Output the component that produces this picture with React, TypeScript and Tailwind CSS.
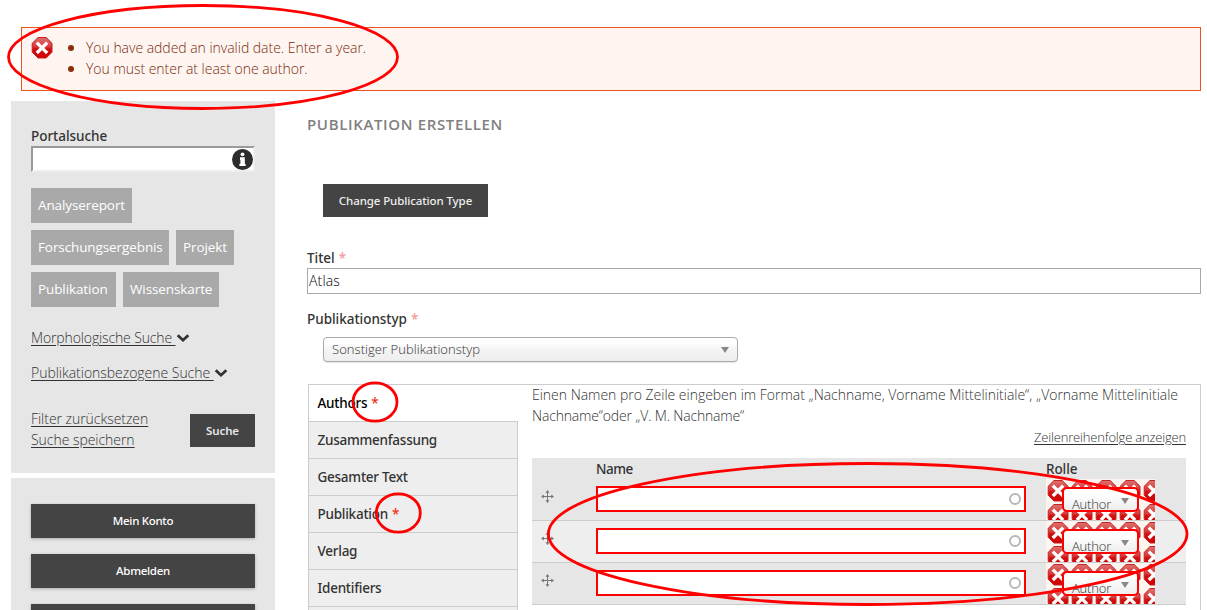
import type { ReactNode } from 'react';

function ErrorOctagon({ className = '' }: { className?: string }) {
  return (
    <svg viewBox="0 0 24 24" className={`block size-6 shrink-0 ${className}`}>
      <defs>
        <linearGradient id="octagon" x1="0" y1="0" x2="0" y2="1">
          <stop offset="0" stopColor="#dc7272" />
          <stop offset="0.45" stopColor="#d93a3a" />
          <stop offset="0.55" stopColor="#cf0f0f" />
          <stop offset="1" stopColor="#d40000" />
        </linearGradient>
      </defs>
      <path d="M8 1.500h8.200l5.800 5.800v8.900l-5.800 5.800H8l-5.800-5.800V7.300z" fill="url(#octagon)" stroke="#c62222" strokeWidth="1" />
      <path d="M8 7.800l8 8M16 7.800l-8 8" stroke="#fff" strokeWidth="3.300" strokeLinecap="square" />
    </svg>
  );
}

function ChevronIcon() {
  return (
    <svg viewBox="0 0 14 10" className="block h-[10px] w-[14px]">
      <path d="M1.700 2.200L7 7.200l5.300-5" fill="none" stroke="#333" strokeWidth="2.800" />
    </svg>
  );
}

function MoveIcon() {
  return (
    <svg viewBox="0 0 13 13" className="block size-[13px]">
      <path d="M6.500 2v9M2 6.500h9" stroke="#777" strokeWidth="1" />
      <path d="M6.500 0l2 2.800h-4zM6.500 13l2-2.800h-4zM0 6.500l2.800-2v4zM13 6.500l-2.800-2v4z" fill="#777" />
    </svg>
  );
}

function SelectArrow() {
  return (
    <svg viewBox="0 0 8 6" className="block h-[6px] w-2">
      <path d="M0 0h8L4 6z" fill="#888" />
    </svg>
  );
}

function Tag({ width, children }: { width: string; children: ReactNode }) {
  return (
    <div className={`${width} flex h-[35px] items-center bg-[#a9a9a9] pl-[7px] text-[13.5px] font-normal tracking-[-0.1px] whitespace-nowrap text-white`}>
      {children}
    </div>
  );
}

function AccountButton({ children }: { children?: ReactNode }) {
  return (
    <div className="flex h-[34px] shrink-0 items-center justify-center bg-[#444] pb-px font-['Noto_Sans',sans-serif] text-[11.5px] font-medium tracking-[-0.3px] text-white shadow-[0_1px_3px_rgba(0,0,0,0.25)]">
      {children}
    </div>
  );
}

function Star({ faded = false }: { faded?: boolean }) {
  return <span className={faded ? 'ml-[4px] text-[#f09a9a]' : 'ml-[4px] text-[#f03020]'}>*</span>;
}

const tabs = [
  { name: 'Zusammenfassung', required: false },
  { name: 'Gesamter Text', required: false },
  { name: 'Publikation', required: true },
  { name: 'Verlag', required: false },
  { name: 'Identifiers', required: false },
];

function AuthorRow({ className }: { className: string }) {
  return (
    <div className={`${className} flex h-[42px] shrink-0 border-b border-[#ccc]`}>
      <div className="w-16 pt-[11px] pl-[9px]">
        <MoveIcon />
      </div>
      <div className="mt-[7px] flex h-[26px] w-[430px] items-center justify-end border-2 border-[#f00] bg-white pr-[3px]">
        <div className="size-[12px] rounded-full border-2 border-[#b8b8b8]" />
      </div>
      <div className="relative ml-5 h-[41px] w-[109px] overflow-hidden bg-[#fef5f1]">
        <div className="grid w-[120px] grid-cols-5">
          {Array.from({ length: 10 }, (_, i) => (
            <ErrorOctagon key={i} />
          ))}
        </div>
        <div className="absolute top-[8px] left-[16px] flex h-[25px] w-[77px] items-start justify-between overflow-hidden rounded-[5px] border-2 border-[#f00] bg-linear-to-b from-white from-20% to-[#eee] pr-[8px] pl-[8px]">
          <span className="pt-[6px] text-[13px] leading-[18px] tracking-[-0.2px] text-[#333]">Author</span>
          <span className="pt-[9px]"><SelectArrow /></span>
        </div>
      </div>
    </div>
  );
}

export default function App() {
  return (
    <div className="relative h-[610px] w-[1207px] overflow-hidden bg-white font-['Open_Sans','Noto_Sans',sans-serif] text-[14px] leading-[21px] font-light tracking-[-0.03px] text-[#333]">
      <div className="flex h-full flex-col pt-[27px]">
        <div className="mr-[6px] ml-[21px] flex h-[64px] shrink-0 border border-[#ed541d] bg-[#fef5f1] pt-[9px] pl-[8px] text-[#7c2a0c]">
          <ErrorOctagon className="-mt-px" />
          <ul className="ml-[32px] list-outside list-disc marker:text-[16px] marker:text-[#8c2e0b]">
            <li>You have added an invalid date. Enter a year.</li>
            <li>You must enter at least one author.</li>
          </ul>
        </div>

        <div className="mt-[10px] flex min-h-0 flex-1 pl-[11px]">
          <aside className="flex w-[264px] shrink-0 flex-col gap-[5px]">
            <section className="h-[372px] shrink-0 bg-[#e6e6e6] px-5 pt-6">
              <div className="h-[21px] pt-px font-['Noto_Sans',sans-serif] text-[13.5px] font-medium">Portalsuche</div>
              <div className="flex h-[26px] items-center justify-end border-2 border-t-[#9a9a9a] border-r-[#eee] border-b-[#eee] border-l-[#9a9a9a] bg-white">
                <svg viewBox="0 0 21 21" className="block size-[21px] shrink-0">
                  <circle cx="10.500" cy="10.500" r="10.500" fill="#2c2c2c" />
                  <circle cx="10.500" cy="5.300" r="1.900" fill="#fff" />
                  <path d="M8 8.300h4.800v6.400h.8v2.400H7.400v-2.400h1v-4H8z" fill="#fff" />
                </svg>
              </div>
              <div className="mt-4 flex flex-wrap gap-[7px]">
                <Tag width="w-[101px]">Analysereport</Tag>
                <Tag width="w-[138px]">Forschungsergebnis</Tag>
                <Tag width="w-[58px]">Projekt</Tag>
                <Tag width="w-[85px]">Publikation</Tag>
                <Tag width="w-[96px]">Wissenskarte</Tag>
              </div>
              <div className="mt-[20px] flex h-[21px] items-center">
                <span className="tracking-[-0.13px] whitespace-pre underline underline-offset-2">Morphologische Suche </span>
                <ChevronIcon />
              </div>
              <div className="mt-[14px] flex h-[21px] items-center">
                <span className="whitespace-pre underline underline-offset-2">Publikationsbezogene Suche </span>
                <ChevronIcon />
              </div>
              <div className="mt-[25px] flex justify-between">
                <div className="tracking-[-0.04px]">
                  <div className="underline underline-offset-2">Filter zurücksetzen</div>
                  <div className="underline underline-offset-2">Suche speichern</div>
                </div>
                <div className="mt-[6px] flex h-[33px] w-[65px] items-center justify-center bg-[#444] pb-px font-['Noto_Sans',sans-serif] text-[11.5px] font-semibold tracking-[-0.1px] text-[#e6e6e6]">
                  Suche
                </div>
              </div>
            </section>
            <section className="flex min-h-0 flex-1 flex-col gap-4 overflow-hidden bg-[#e6e6e6] px-5 pt-[26px]">
              <AccountButton>Mein Konto</AccountButton>
              <AccountButton>Abmelden</AccountButton>
              <AccountButton />
            </section>
          </aside>

          <main className="ml-8 flex w-[894px] shrink-0 flex-col pt-[13px]">
            <h1 className="text-[15px] font-semibold tracking-[0.64px] text-[#808080]">PUBLIKATION ERSTELLEN</h1>
            <div className="mt-[49px] ml-4 flex h-[33px] w-[165px] shrink-0 items-center justify-center bg-[#444] pb-px font-['Noto_Sans',sans-serif] text-[11.5px] font-medium tracking-[-0.1px] text-[#eee]">
              Change Publication Type
            </div>
            <div className="mt-[30px] h-[21px] pt-px font-['Noto_Sans',sans-serif] text-[13.5px] font-medium">
              Titel<Star faded />
            </div>
            <div className="flex h-[26px] shrink-0 items-center border border-[#a9a9a9] pb-px pl-px tracking-[0.15px] text-black">Atlas</div>
            <div className="mt-[14px] h-[21px] pt-px font-['Noto_Sans',sans-serif] text-[13.5px] font-medium">
              Publikationstyp<Star faded />
            </div>
            <div className="mt-[8px] ml-4 flex h-[25px] w-[415px] shrink-0 items-center justify-between rounded-[4px] border border-[#aaa] bg-linear-to-b from-white from-20% via-[#f4f4f4] via-50% to-[#eee] pr-[8px] pl-2 text-[13px] shadow-[0_1px_1px_rgba(0,0,0,0.1)]">
              <span className="tracking-[0.05px]">Sonstiger Publikationstyp</span>
              <SelectArrow />
            </div>

            <div className="mt-[22px] ml-px flex min-h-0 flex-1 overflow-hidden border-x border-t border-[#ccc]">
              <div className="w-[209px] shrink-0 font-['Noto_Sans',sans-serif] text-[13.5px] font-medium tracking-[-0.25px]">
                <div className="flex h-[36px] items-center pt-px pl-[8.500px] text-black">
                  Authors<Star />
                </div>
                {tabs.map((t) => (
                  <div key={t.name} className="flex h-[37px] items-center border-t border-r border-[#ccc] bg-[#eee] pt-px pl-[8.500px]">
                    {t.name}
                    {t.required && <Star />}
                  </div>
                ))}
                <div className="h-[37px] border-t border-r border-[#ccc] bg-[#eee]" />
              </div>
              <div className="ml-[14px] flex w-[654px] shrink-0 flex-col">
                <div className="-mt-px whitespace-nowrap tracking-[-0.02px]">
                  Einen Namen pro Zeile eingeben im Format „Nachname, Vorname Mittelinitiale“, „Vorname Mittelinitiale
                  <br />
                  <span className="tracking-[-0.18px]">Nachname“oder „V. M. Nachname“</span>
                </div>
                <div className="mt-px text-right text-[13px] tracking-[-0.19px]">
                  <span className="underline underline-offset-2">Zeilenreihenfolge anzeigen</span>
                </div>
                <div className="mt-[10px] flex h-[21px] shrink-0 bg-[#e6e6e6] pt-px pl-16 font-['Noto_Sans',sans-serif] text-[13.5px] font-medium tracking-[-0.5px]">
                  <div className="w-[450px]">Name</div>
                  <div className="tracking-[-0.1px]">Rolle</div>
                </div>
                <AuthorRow className="bg-[#e6e6e6]" />
                <AuthorRow className="bg-[#eee]" />
                <AuthorRow className="bg-[#e6e6e6]" />
              </div>
            </div>
          </main>
        </div>
      </div>

      <svg viewBox="0 0 1207 610" className="pointer-events-none absolute inset-0 h-[610px] w-[1207px]" fill="none" stroke="#f00" strokeWidth="2.800">
        <ellipse cx="203" cy="57" rx="194.500" ry="51.500" />
        <ellipse cx="375" cy="402" rx="22" ry="19.200" />
        <ellipse cx="398.300" cy="513" rx="22" ry="19.200" />
        <ellipse cx="867.700" cy="534" rx="319.300" ry="70.500" />
      </svg>
    </div>
  );
}
